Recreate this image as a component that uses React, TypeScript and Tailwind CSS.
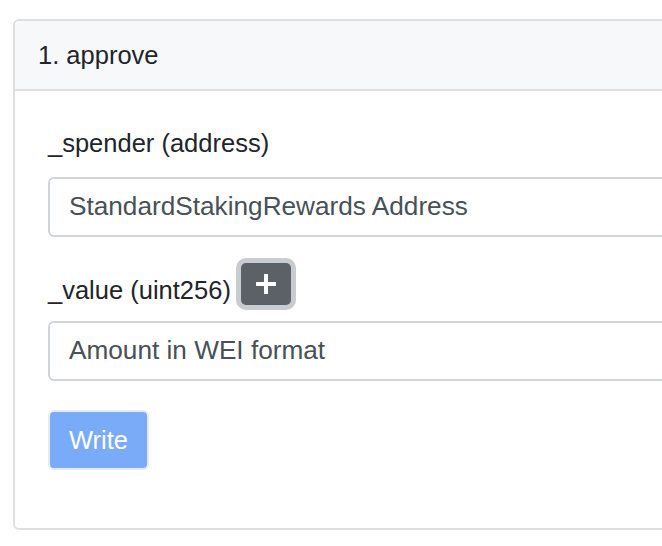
export default function App() {
  return (
    <div className="w-[662px] h-[546px] overflow-hidden bg-white pt-[19px] pl-[13px] font-['Liberation_Sans',Arial,sans-serif]">
      <div className="w-[720px] rounded-[6px] border-2 border-[#dfdfdf] bg-white">
        <div className="h-[70px] flex items-center pl-[23px] bg-[#f7f8fa] border-b-2 border-[#dfdfdf] rounded-t-[5px] text-[25.5px] text-[#212529]">
          1. approve
        </div>
        <div className="pl-[33px] pt-[36px] pb-[58px]">
          <div className="h-[33px] flex items-center text-[25.5px] text-[#212529]">_spender (address)</div>
          <div className="mt-[17px] h-[60px] flex items-center pl-[19px] border-2 border-[#ced4da] rounded-[6px] text-[26.2px] text-[#495057]">
            StandardStakingRewards Address
          </div>
          <div className="mt-[21px] h-[52px] flex items-center">
            <span className="pt-[12px] text-[25.5px] text-[#212529]">_value (uint256)</span>
            <button className="ml-[10px] w-[50px] h-[42px] flex items-center justify-center bg-[#5a6268] rounded-[5px] ring-[5px] ring-[#c8cbcf]">
              <svg width="20" height="20" viewBox="0 0 20 20">
                <path d="M10 1v18M1 10h18" stroke="white" strokeWidth="4" strokeLinecap="round" />
              </svg>
            </button>
          </div>
          <div className="mt-[11px] h-[60px] flex items-center pl-[19px] border-2 border-[#ced4da] rounded-[6px] text-[26.2px] text-[#495057]">
            Amount in WEI format
          </div>
          <div className="mt-[29px] w-[101px] h-[60px] flex items-center justify-center bg-[#7aabf8] border-2 border-[#e6eaf0] rounded-[6px] text-[25.5px] text-white">
            Write
          </div>
        </div>
      </div>
    </div>
  );
}
